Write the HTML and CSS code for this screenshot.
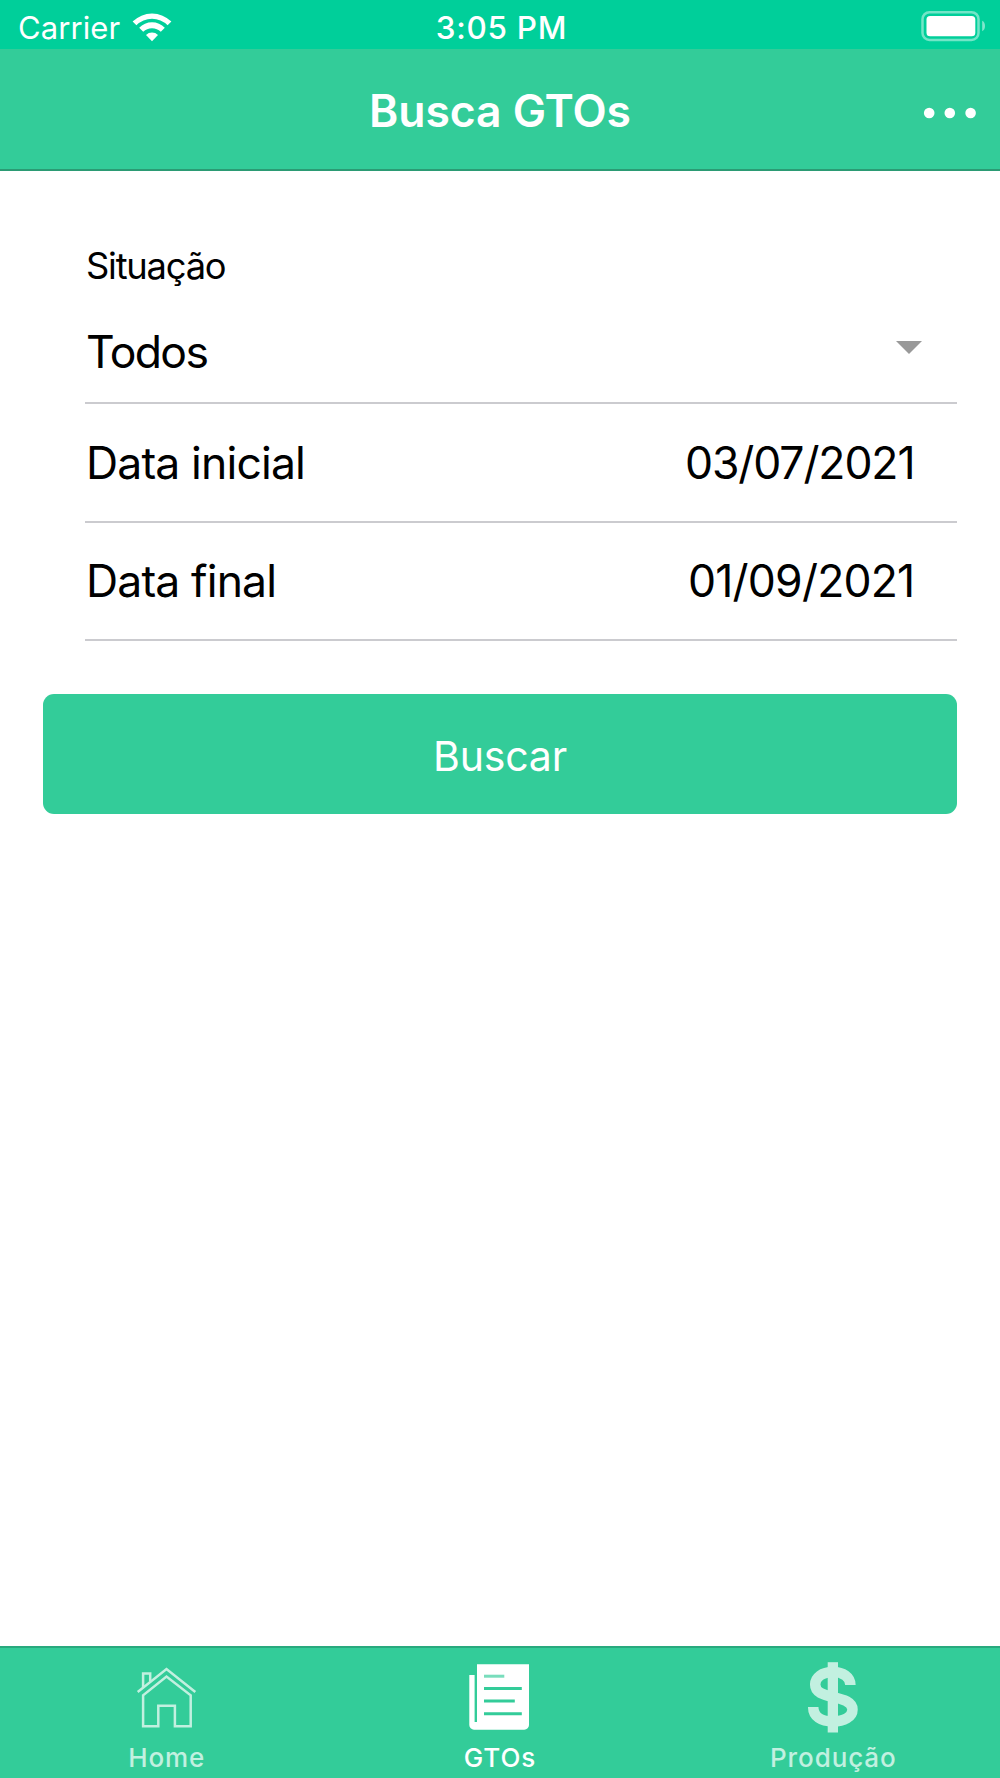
FILE: index.html
```html
<!DOCTYPE html>
<html lang="pt-BR">
<head>
<meta charset="utf-8">
<title>Busca GTOs</title>
<link rel="stylesheet" href="styles.css">
</head>
<body>
<div class="screen">
  <header class="status-bar">
    <div class="status-left">
      <span class="carrier">Carrier</span>
      <svg class="wifi" width="40" height="30" viewBox="0 0 40 30">
        <path d="M0.6 9.6 A27.5 27.5 0 0 1 39.4 9.6 L35.6 13.2 A22 22 0 0 0 4.4 13.2 Z"/>
        <path d="M7.2 15.8 A17.5 17.5 0 0 1 32.8 15.8 L28.8 19.8 A12.4 12.4 0 0 0 11.2 19.8 Z"/>
        <path d="M14 23 A8.5 8.5 0 0 1 26 23 L20 29.2 Z"/>
      </svg>
    </div>
    <span class="clock">3:05 PM</span>
    <div class="status-right">
      <svg class="battery" width="65" height="32" viewBox="0 0 65 32">
        <rect class="battery-shell" x="2.5" y="2.2" width="56" height="27.8" rx="7"/>
        <rect x="6.5" y="6" width="48.8" height="20.3" rx="3.6"/>
        <path class="battery-cap" d="M62.2 10.8Q65 12.2 65 16T62.2 21.2Z"/>
      </svg>
    </div>
  </header>
  <div class="nav-bar">
    <span class="nav-side"></span>
    <h1 class="title">Busca GTOs</h1>
    <div class="nav-side">
      <svg class="more" width="54" height="12" viewBox="0 0 54 12">
        <circle cx="6.2" cy="6" r="5.3"/><circle cx="26.8" cy="6" r="5.3"/><circle cx="47.6" cy="6" r="5.3"/>
      </svg>
    </div>
  </div>
  <main class="content">
    <div class="form">
      <div class="field select">
        <span class="label">Situação</span>
        <div class="select-row">
          <span class="value">Todos</span>
          <svg class="caret" width="26" height="13" viewBox="0 0 26 13"><path d="M0 0H26L13 13Z"/></svg>
        </div>
      </div>
      <div class="field date-start"><span class="name">Data inicial</span><span class="date">03/07/2021</span></div>
      <div class="field date-end"><span class="name">Data final</span><span class="date">01/09/2021</span></div>
    </div>
    <button class="search">Buscar</button>
  </main>
  <nav class="tab-bar">
    <a class="tab">
      <svg class="tab-icon outline" width="80" height="76" viewBox="0 0 80 76">
        <path d="M10.7 38 39.5 15 68.3 38"/>
        <path d="M16.1 33V19.4H23.2V27.5"/>
        <path d="M16.1 41.3V72.2H31.3V51.7H47.9V72.2H63.7V41.3L39.5 22.6Z"/>
      </svg>
      <span class="tab-label">Home</span>
    </a>
    <a class="tab active">
      <svg class="tab-icon" width="80" height="76" viewBox="0 0 80 76">
        <path d="M17 10.3H69V71A4.7 4.7 0 0 1 64.3 75.7H14A4.7 4.7 0 0 1 9.3 71V21H14.6V68H17Z"/>
        <path class="doc-line faint" d="M24 22.2H44.3"/>
        <path class="doc-line" d="M24 34.5H61.8M24 47H54.8M24 59.7H61.8"/>
      </svg>
      <span class="tab-label">GTOs</span>
    </a>
    <a class="tab">
      <svg class="tab-icon dollar" width="80" height="76" viewBox="0 0 80 76">
        <path class="dollar-bar" d="M34.7 8.2H45V78.5H34.7Z"/>
        <path class="dollar-curve" d="M57.4 31C57.4 23 50 18 40 18C29 18 22.2 23.5 22.2 30.5C22.2 38.5 30 40.5 40 43C51 45.5 59.5 48 59.5 55.5C59.5 63 51 67.5 40 67.5C28 67.5 20.2 62.5 20.2 53"/>
      </svg>
      <span class="tab-label">Produção</span>
    </a>
  </nav>
</div>
</body>
</html>
```
FILE: styles.css
```css
* { box-sizing: border-box; }
body { margin: 0; font-family: Inter, "Noto Sans", sans-serif; color: #000; }
svg { display: block; flex: none; }
.screen { width: 1000px; height: 1778px; display: flex; flex-direction: column; background: #fff; }

.status-bar {
  height: 49px; padding: 6px 15px 0 18px;
  display: grid; grid-template-columns: 1fr auto 1fr; align-items: center;
  background: #00cf9a; color: #fff; line-height: 40px; white-space: nowrap;
}
.status-left { display: flex; align-items: center; gap: 12px; }
.status-left .wifi { margin-bottom: 2px; }
.status-right { display: flex; justify-content: flex-end; padding-bottom: 3px; }
.wifi, .battery, .more { fill: #fff; }
.battery-shell { fill: none; stroke: #fff; stroke-width: 2.5; opacity: .45; }
.battery-cap { opacity: .5; }
.carrier { font-size: 31px; letter-spacing: .1px; }
.clock { font-size: 31.5px; font-weight: 500; letter-spacing: .7px; }

.nav-bar {
  height: 122px; padding: 4px 23px 0; border-bottom: 2px solid #2b9b74;
  display: grid; grid-template-columns: 1fr auto 1fr; align-items: center;
  background: #33cc99; color: #fff;
}
.nav-side { display: flex; justify-content: flex-end; padding-top: 4px; }
.title { margin: 0; font-size: 44.5px; font-weight: 560; line-height: 54px; letter-spacing: -.1px; }

.content { flex: 1; display: flex; flex-direction: column; padding: 0 42.6px; }
.form { margin-left: 42.4px; }
.field {
  display: flex; align-items: center; justify-content: space-between;
  border-bottom: 2px solid #cbcbcf; line-height: 50px; font-size: 44.5px;
}
.select { height: 233px; padding-top: 75px; flex-direction: column; align-items: stretch; justify-content: flex-start; }
.label { padding-left: 1px; font-size: 36.3px; line-height: 40px; letter-spacing: -1.2px; }
.select-row { margin-top: 41px; padding-right: 35px; display: flex; align-items: center; justify-content: space-between; }
.value { padding-left: 1px; letter-spacing: -1.6px; }
.caret { fill: #999; margin-bottom: 9px; }
.date-start { height: 119px; }
.date-end { height: 118px; }
.name { padding-left: 1px; letter-spacing: -.85px; }
.date { padding-right: 43px; letter-spacing: -1.1px; }
.date-end .date { letter-spacing: -.8px; }
.search {
  height: 120px; margin-top: 53px; padding: 3px 0 0; border: 0; border-radius: 11px;
  background: #33cc99; color: #fff; font: inherit; font-size: 41px; letter-spacing: -.2px;
}

.tab-bar { height: 132px; display: flex; background: #33cc99; border-top: 2px solid #29a97e; }
.tab { flex: 1; padding-top: 6px; display: flex; flex-direction: column; align-items: center; color: #c2f0e0; }
.tab.active { color: #fff; }
.tab-icon { fill: currentColor; overflow: visible; }
.outline { fill: none; stroke: currentColor; stroke-width: 2.5; }
.doc-line { stroke: #33cc99; stroke-width: 3; }
.faint { opacity: .65; }
.dollar-curve { fill: none; stroke: currentColor; stroke-width: 10.5; }
.tab-label { margin-top: 12px; font-size: 26px; font-weight: 480; line-height: 32px; letter-spacing: .9px; }
```
